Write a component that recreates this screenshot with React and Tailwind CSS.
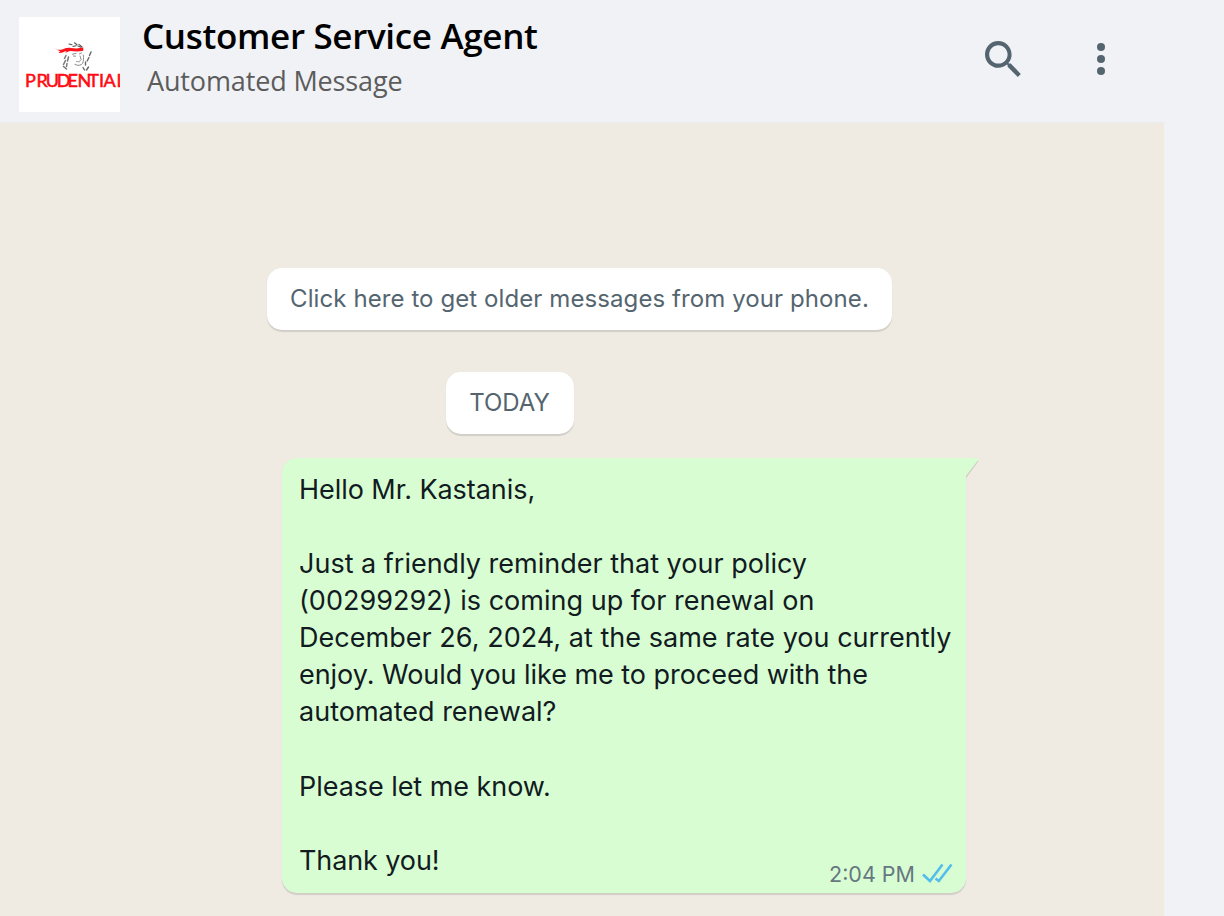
function Logo() {
  return (
    <svg className="h-[95px] w-[101px] shrink-0 bg-white" viewBox="0 0 101 95" aria-hidden="true">
      <g fill="none" strokeLinecap="round">
        <path d="M50 27l3 .8M54 29.500l3-.8M55.500 25.800l2.500 2M59 29l3 1.200M60 27.300l3 2.500" strokeWidth="1.100" stroke="#555" />
        <path d="M47 38.500l-1.500 3M49.500 40l-1 4M46.500 43.500l-2 4M44.500 49.500l3 2.500M48 46.500l-.5 3" strokeWidth="1.500" stroke="#777" />
        <path d="M53.500 37.200l3.500-.8M54.500 39l2 .2M60.500 36.800l2-.8M61 39l1.200 3.500-1.500 1.500M56 47.500c3 1.500 6 1 7.500-1 1-2 1.300-5 .8-8.500" strokeWidth="1" stroke="#8a8a8a" />
        <path d="M57.500 44.500l3 .3" strokeWidth=".9" stroke="#999" />
        <path d="M72 35l-1.500 3.500M70 40.500l-1.800 3.500M66.500 45v3M64 50.500l1.500 2.500M69.500 50l-2 3" strokeWidth="1.400" stroke="#666" />
      </g>
      <path d="M36 31.800c3 .6 4.500 1.500 7 .8 3-1.200 5-2.300 9-1.600 4 .6 8 .6 12.300-.4v3.200c-5 1.200-9 .6-13 .3-2 0-2.500 1.400-5 1.600l1.200-1.700c-3 .3-4 2.500-8 2l2-1.800-3-.2 2-.8z" fill="#fb141a" />
      <text x="6 17.500 26.800 37.800 48.500 58.600 69.300 80.100 84.500 97.500" y="69.900" fill="#ff0a12" stroke="#ff0a12" strokeWidth=".55" fontFamily="Lato, sans-serif" fontSize="18" fontWeight="400">PRUDENTIAL</text>
    </svg>
  );
}

const lines = [
  ["Hello Mr. Kastanis,", "tracking-[-0.05px]"],
  ["", ""],
  ["Just a friendly reminder that your policy", "tracking-normal"],
  ["(00299292) is coming up for renewal on", "tracking-[0.02px]"],
  ["December 26, 2024, at the same rate you currently", "tracking-[0.03px]"],
  ["enjoy. Would you like me to proceed with the", "tracking-[-0.04px]"],
  ["automated renewal?", "tracking-normal"],
  ["", ""],
  ["Please let me know.", "tracking-[-0.05px]"],
  ["", ""],
  ["Thank you!", "tracking-[-0.1px]"],
];

export default function App() {
  return (
    <div className="flex h-[916px] w-[1224px] flex-col overflow-hidden bg-[#f0f2f6] font-['Inter',sans-serif]">
      <header className="flex h-[123px] w-[1164px] shrink-0 items-start border-b border-[#e9edf0] pl-[19px] pt-[17px]">
        <Logo />
        <div className="-mt-px ml-[22px] flex flex-col whitespace-nowrap font-['Open_Sans',sans-serif]">
          <h1 className="text-[35px] leading-[40px] font-semibold tracking-[-0.33px] text-black">Customer Service Agent</h1>
          <p className="mt-[7px] pl-[5px] text-[27px] leading-[36px] tracking-[-0.14px] text-[#5c5c5c]">Automated Message</p>
        </div>
        <div className="mr-[57px] ml-auto flex items-center pt-[18px]">
          <button aria-label="Search" className="mr-[68px]">
            <svg className="block h-[48px] w-[48px]" viewBox="0 0 24 24" fill="#54656f">
              <path d="M15.900 14.300H15l-.3-.3c1-1.100 1.600-2.700 1.600-4.300 0-3.700-3-6.700-6.700-6.700S3 6 3 9.700s3 6.700 6.700 6.700c1.600 0 3.200-.6 4.300-1.600l.3.3v.8l5.100 5.100 1.500-1.500-5-5.200zm-6.200 0c-2.600 0-4.600-2.100-4.600-4.600s2.100-4.600 4.600-4.600 4.600 2.100 4.600 4.600-2 4.600-4.600 4.600z" />
            </svg>
          </button>
          <button aria-label="Menu" className="flex w-[12px] flex-col items-center gap-[4px]">
            <i className="size-[8px] rounded-full bg-[#54656f]" />
            <i className="size-[8px] rounded-full bg-[#54656f]" />
            <i className="size-[8px] rounded-full bg-[#54656f]" />
          </button>
        </div>
      </header>
      <main className="flex w-[1164px] flex-1 flex-col items-start border-r-4 border-[#f0eae1] bg-[#efeae2] pt-[145px]">
        <button className="ml-[267px] flex h-[62px] w-[625px] items-center justify-center rounded-[15px] bg-white text-[24px] tracking-[0.09px] whitespace-nowrap text-[#54656f] shadow-[0_1.5px_1px_rgba(11,20,26,0.13)]">
          Click here to get older messages from your phone.
        </button>
        <div className="mt-[42px] ml-[446px] flex h-[62px] w-[128px] items-center justify-center rounded-[15px] bg-white pr-[1px] text-[24px] text-[#54656f] shadow-[0_1.5px_1px_rgba(11,20,26,0.13)]">
          TODAY
        </div>
        <section className="relative mt-[24px] ml-[282px] h-[435px] w-[684px] rounded-[15px] rounded-tr-none bg-[#d9fdd3] pt-[13px] pl-[17px] shadow-[0_1.5px_1px_rgba(11,20,26,0.13)]">
          <svg className="absolute top-0 left-[684px] h-[22px] w-[14px]" viewBox="0 0 14 22" aria-hidden="true">
            <path d="M0 2h11q2 1 .5 2.500L0 20z" fill="#0b141a" opacity=".15" />
            <path d="M0 0h10.500q3 .8 1 3L0 18z" fill="#d9fdd3" />
          </svg>
          {lines.map(([line, tracking], i) => (
            <p key={i} className={"h-[37.08px] text-[27px] leading-[37px] whitespace-nowrap text-[#111b21] " + tracking}>{line}</p>
          ))}
          <div className="absolute right-[13px] bottom-[6px] flex items-center text-[21.5px] leading-[26px] text-[#667781]">
            <span className="whitespace-nowrap">2:04 PM</span>
            <svg className="ml-[7px] h-[22px] w-[31px]" viewBox="0 0 31 22" fill="none" stroke="#53bdeb" strokeWidth="2.6">
              <path d="M1 11.500l7 6.500L20.500 1.500" />
              <path d="M13.500 15.500l3.300 2.500L29.500 1.500" />
            </svg>
          </div>
        </section>
      </main>
    </div>
  );
}
